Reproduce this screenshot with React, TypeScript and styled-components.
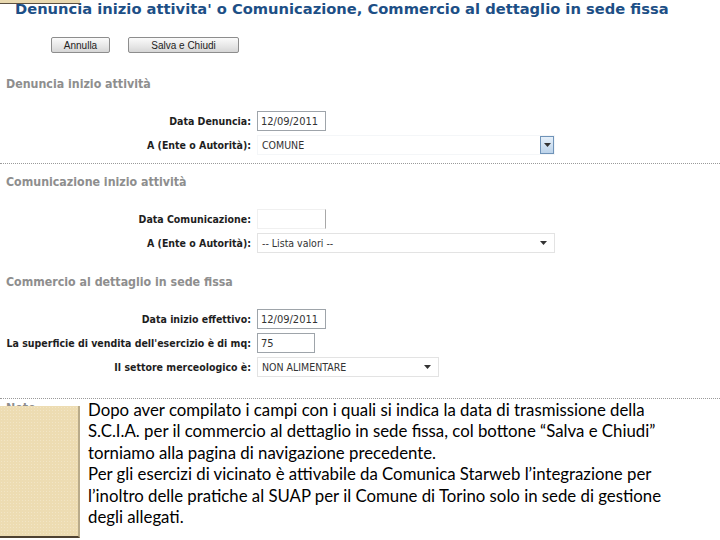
import React from 'react';
import styled, { createGlobalStyle } from 'styled-components';

const GlobalStyle = createGlobalStyle`
  html, body {
    margin: 0;
    padding: 0;
    background: #fff;
  }
  body {
    font-family: "DejaVu Sans Condensed", "DejaVu Sans", sans-serif;
  }
`;

const Page = styled.div`
  position: relative;
  width: 720px;
  height: 540px;
  overflow: hidden;
  background: #fff;
`;

const TopTab = styled.div`
  position: absolute;
  top: 0;
  left: 0;
  width: 80px;
  height: 3px;
  background: #e9d9b0;
  border-bottom: 1px solid #5b5040;
`;

const Title = styled.h1`
  margin: 0;
  padding-left: 15px;
  font-family: "DejaVu Sans", Verdana, sans-serif;
  font-weight: bold;
  font-size: 14.7px;
  line-height: 18px;
  color: #1d4f86;
  white-space: nowrap;
`;

const ButtonBar = styled.div`
  display: flex;
  gap: 18px;
  margin-top: 19px;
  padding-left: 51px;
`;

const Button = styled.button<{ $w: number }>`
  width: ${p => p.$w}px;
  height: 16px;
  padding: 0;
  border: 1px solid #8d8d8d;
  border-radius: 2px;
  background: linear-gradient(#fbfbfb, #e6e6e6 60%, #d6d6d6);
  font-family: "Liberation Sans", Arial, sans-serif;
  font-size: 10px;
  color: #222;
`;

const Section = styled.section<{ $top: number; $bottom: number; $divided?: boolean }>`
  padding-top: ${p => p.$top}px;
  padding-bottom: ${p => p.$bottom}px;
  border-bottom: ${p => (p.$divided ? '1px dotted #9a9a9a' : 'none')};
`;

const SectionTitle = styled.h2`
  margin: 0;
  padding-left: 6px;
  font-family: "DejaVu Sans Condensed", "DejaVu Sans", sans-serif;
  font-weight: bold;
  font-size: 12.3px;
  line-height: 16px;
  color: #8e8e8e;
`;

const Rows = styled.div`
  margin-top: 17px;
  display: grid;
  grid-template-columns: 251px auto;
  grid-auto-rows: 24px;
  column-gap: 6px;
  align-items: center;
  justify-items: start;
`;

const Label = styled.label`
  justify-self: end;
  font-family: "DejaVu Sans Condensed", "DejaVu Sans", sans-serif;
  font-weight: bold;
  font-size: 10.5px;
  color: #1e1e1e;
  white-space: nowrap;
`;

const TextField = styled.input<{ $w: number; $faint?: boolean }>`
  box-sizing: border-box;
  width: ${p => p.$w}px;
  height: 20px;
  margin: 0;
  padding: 0 3px;
  border: 1px solid ${p => (p.$faint ? '#f0f0f0' : '#9ea4aa')};
  border-right-color: ${p => (p.$faint ? '#a8a8a8' : '#9ea4aa')};
  background: #fff;
  font-family: "DejaVu Sans Condensed", "DejaVu Sans", sans-serif;
  font-size: 11px;
  color: #333;
  outline: none;
`;

const Dropdown = styled.div<{ $w: number; $boxed?: boolean }>`
  box-sizing: border-box;
  width: ${p => p.$w}px;
  height: 20px;
  display: flex;
  align-items: center;
  justify-content: space-between;
  padding-left: 4px;
  border: 1px solid ${p => (p.$boxed ? '#f4f6f8' : '#e3e3e3')};
  background: #fff;
  font-family: "DejaVu Sans Condensed", "DejaVu Sans", sans-serif;
  font-size: 10.5px;
  color: #333;
`;

const Arrow = styled.span<{ $boxed?: boolean }>`
  box-sizing: border-box;
  width: 14px;
  height: ${p => (p.$boxed ? '18px' : '14px')};
  display: flex;
  align-items: center;
  justify-content: center;
  border: ${p => (p.$boxed ? '1px solid #6f93b8' : 'none')};
  background: ${p => (p.$boxed ? 'linear-gradient(#e6f0fa, #bcd3ea)' : 'transparent')};
  margin-right: ${p => (p.$boxed ? '0' : '4px')};
`;

const Callout = styled.div`
  position: absolute;
  top: 399px;
  left: 0;
  right: 0;
  bottom: 0;
  display: flex;
`;

const Swatch = styled.div`
  width: 78px;
  margin: 7px 0 2px;
  border-right: 2px solid #b9ab8a;
  border-bottom: 2px solid #4e4232;
  background-color: #eddcb2;
  background-image: radial-gradient(rgba(255, 255, 255, 0.25) 0.6px, transparent 0.8px);
  background-size: 3px 3px;
`;

const NoteText = styled.p`
  flex: 1;
  margin: 0;
  padding-left: 8px;
  background: #fff;
  font-family: Lato, "Open Sans", sans-serif;
  font-size: 16.8px;
  line-height: 21.4px;
  color: #000;
  white-space: nowrap;
`;

const Chevron: React.FC = () => (
  <svg width="7" height="4" viewBox="0 0 7 4">
    <path d="M0 0 H7 L3.5 4 Z" fill="#333" />
  </svg>
);

const Select: React.FC<{ w: number; value: string; boxed?: boolean }> = ({ w, value, boxed }) => (
  <Dropdown $w={w} $boxed={boxed}>
    <span>{value}</span>
    <Arrow $boxed={boxed}>
      <Chevron />
    </Arrow>
  </Dropdown>
);

const App: React.FC = () => {
  return (
    <Page>
      <GlobalStyle />
      <TopTab />
      <Title>Denuncia inizio attivita' o Comunicazione, Commercio al dettaglio in sede fissa</Title>

      <ButtonBar>
        <Button $w={59}>Annulla</Button>
        <Button $w={111}>Salva e Chiudi</Button>
      </ButtonBar>

      <Section $top={23} $bottom={6} $divided>
        <SectionTitle>Denuncia inizio attività</SectionTitle>
        <Rows>
          <Label>Data Denuncia:</Label>
          <TextField $w={69} readOnly value="12/09/2011" />
          <Label>A (Ente o Autorità):</Label>
          <Select w={298} value="COMUNE" boxed />
        </Rows>
      </Section>

      <Section $top={10} $bottom={0}>
        <SectionTitle>Comunicazione inizio attività</SectionTitle>
        <Rows>
          <Label>Data Comunicazione:</Label>
          <TextField $w={69} $faint readOnly value="" />
          <Label>A (Ente o Autorità):</Label>
          <Select w={298} value="-- Lista valori --" />
        </Rows>
      </Section>

      <Section $top={19} $bottom={19} $divided>
        <SectionTitle>Commercio al dettaglio in sede fissa</SectionTitle>
        <Rows>
          <Label>Data inizio effettivo:</Label>
          <TextField $w={69} readOnly value="12/09/2011" />
          <Label>La superficie di vendita dell'esercizio è di mq:</Label>
          <TextField $w={58} readOnly value="75" />
          <Label>Il settore merceologico è:</Label>
          <Select w={182} value="NON ALIMENTARE" />
        </Rows>
      </Section>

      <Section $top={1} $bottom={0}>
        <SectionTitle>Note</SectionTitle>
      </Section>

      <Callout>
        <Swatch />
        <NoteText>
          Dopo aver compilato i campi con i quali si indica la data di trasmissione della
          <br />
          S.C.I.A. per il commercio al dettaglio in sede fissa, col bottone “Salva e Chiudi”
          <br />
          torniamo alla pagina di navigazione precedente.
          <br />
          Per gli esercizi di vicinato è attivabile da Comunica Starweb l’integrazione per
          <br />
          l’inoltro delle pratiche al SUAP per il Comune di Torino solo in sede di gestione
          <br />
          degli allegati.
        </NoteText>
      </Callout>
    </Page>
  );
};

export default App;
